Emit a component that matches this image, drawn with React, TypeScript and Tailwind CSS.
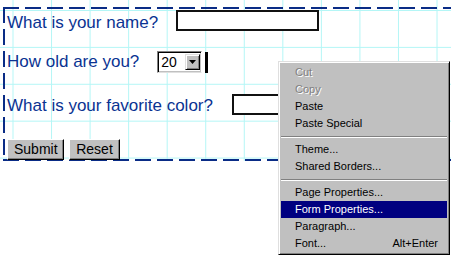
const menuFont = "font-['Liberation_Sans',Arial,sans-serif] text-[11px]"

type MenuEntry =
  | { kind: 'item'; label: string; disabled?: boolean; active?: boolean; shortcut?: string }
  | { kind: 'sep' }

const entries: MenuEntry[] = [
  { kind: 'item', label: 'Cut', disabled: true },
  { kind: 'item', label: 'Copy', disabled: true },
  { kind: 'item', label: 'Paste' },
  { kind: 'item', label: 'Paste Special' },
  { kind: 'sep' },
  { kind: 'item', label: 'Theme...' },
  { kind: 'item', label: 'Shared Borders...' },
  { kind: 'sep' },
  { kind: 'item', label: 'Page Properties...' },
  { kind: 'item', label: 'Form Properties...', active: true },
  { kind: 'item', label: 'Paragraph...' },
  { kind: 'item', label: 'Font...', shortcut: 'Alt+Enter' },
]

const ContextMenu = () => {
  return (
    <div className={`absolute left-[278px] top-[61px] w-[172px] border border-t-[#dfdfdf] border-l-[#dfdfdf] border-r-black border-b-black bg-[#c0c0c0] p-[2px] shadow-[inset_1px_1px_#ffffff,inset_-1px_-1px_#808080] ${menuFont}`}>
      {entries.map((e, i) =>
        e.kind === 'sep' ? (
          <div key={i} className="flex h-[9px] flex-col justify-center">
            <div className="h-px bg-[#808080]" />
            <div className="h-px bg-white" />
          </div>
        ) : (
          <div
            key={i}
            className={`flex h-[17px] items-center justify-between pl-[14px] pr-[9px] ${
              e.active ? 'bg-[#000080] text-white' : e.disabled ? 'text-[#808080] [text-shadow:1px_1px_0_#ffffff]' : 'text-black'
            }`}
          >
            <span>{e.label}</span>
            {e.shortcut && <span>{e.shortcut}</span>}
          </div>
        )
      )}
    </div>
  )
}

const Label = ({ children, className = '' }: { children: string; className?: string }) => (
  <span className={`whitespace-nowrap text-[17px] text-[#0a3392] ${className}`}>{children}</span>
)

const Win95Button = ({ children }: { children: string }) => (
  <button className="h-[21px] w-full border border-t-white border-l-white border-r-black border-b-black bg-[#c0c0c0] px-[6px] text-[14px] leading-[17px] text-black shadow-[inset_-1px_-1px_#808080]">
    {children}
  </button>
)

export default function App() {
  return (
    <div className="relative h-[256px] w-[451px] overflow-hidden bg-white font-['Liberation_Sans',Arial,sans-serif]">
      {/* grid canvas */}
      <div className="h-[161px] pl-[3px] pt-[7px] [background-image:linear-gradient(90deg,#b4f6f6_1px,transparent_1px),linear-gradient(180deg,#b4f6f6_1px,transparent_1px)] [background-size:38.55px_36.9px] [background-position:12.5px_10px]">
        {/* dashed form box */}
        <div className="h-[154px] pl-[4px] pt-[3px] bg-no-repeat [background-image:repeating-linear-gradient(90deg,#0a2c86_0_16px,transparent_16px_22px),repeating-linear-gradient(90deg,#0a2c86_0_16px,transparent_16px_22px),repeating-linear-gradient(180deg,#0a2c86_0_16px,transparent_16px_22px)] [background-size:100%_2px,100%_2px,2px_100%] [background-position:0_0,0_100%,0_0]">
          {/* name */}
          <div className="flex h-[21px] items-start">
            <Label className="mt-[2px] leading-[21px]">What is your name?</Label>
            <div className="ml-[18px] h-[21px] w-[143px] border-2 border-[#111111] bg-white" />
          </div>

          {/* age */}
          <div className="mt-[20px] flex h-[22px] items-start">
            <Label className="leading-[22px]">How old are you?</Label>
            <div className="ml-[18px] flex h-[22px] w-[45px] items-center border border-t-[#808080] border-l-[#808080] border-r-white border-b-[#dfdfdf] bg-white shadow-[inset_1px_1px_#000000,inset_-1px_-1px_#c0c0c0]">
              <span className="ml-[3px] flex-1 text-[14px] leading-[16px] text-black">20</span>
              <div className="mr-[1px] flex h-[16px] w-[15px] items-center justify-center border border-t-[#dfdfdf] border-l-[#dfdfdf] border-r-black border-b-black bg-[#c0c0c0] shadow-[inset_1px_1px_#ffffff,inset_-1px_-1px_#808080]">
                <svg width="7" height="4" viewBox="0 0 7 4">
                  <path d="M0 0h7L3.5 4z" fill="#000" />
                </svg>
              </div>
            </div>
            <div className="ml-[3px] mt-px h-[21px] w-[3px] bg-black" />
          </div>

          {/* color */}
          <div className="mt-[21px] flex h-[21px] items-start">
            <Label className="mt-[1px] leading-[21px]">What is your favorite color?</Label>
            <div className="ml-[19px] h-[21px] w-[143px] border-2 border-[#111111] bg-white" />
          </div>

          {/* buttons */}
          <div className="mt-[22px] flex gap-[5px]">
            <div className="w-[57px]">
              <Win95Button>Submit</Win95Button>
            </div>
            <div className="w-[51px]">
              <Win95Button>Reset</Win95Button>
            </div>
          </div>
        </div>
      </div>

      <ContextMenu />
    </div>
  )
}
